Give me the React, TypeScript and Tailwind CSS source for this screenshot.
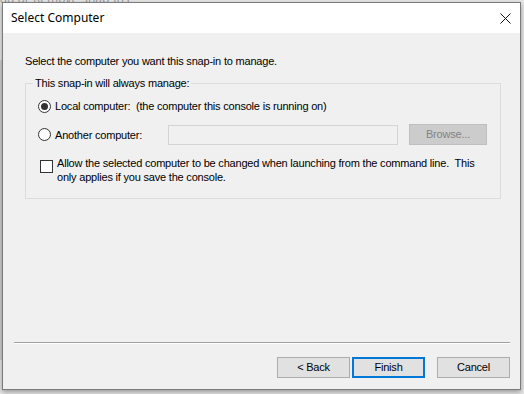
import React from "react";

const body = { fontFamily: '"Liberation Sans", Arial, sans-serif', letterSpacing: "-0.2px" };

function Radio({ checked }: { checked?: boolean }) {
  return (
    <span className="flex h-[13px] w-[13px] shrink-0 items-center justify-center rounded-full border border-[#333333] bg-white">
      {checked && <span className="h-[7px] w-[7px] rounded-full bg-[#333333]" />}
    </span>
  );
}

function Btn({ children, primary }: { children: React.ReactNode; primary?: boolean }) {
  return (
    <div
      className={
        "flex h-[21px] w-[73px] items-center justify-center bg-[#e1e1e1] text-[11px] text-black " +
        (primary ? "border-2 border-[#0078d7]" : "border border-[#adadad]")
      }
    >
      {children}
    </div>
  );
}

export default function App() {
  return (
    <div className="relative h-[394px] w-[524px] overflow-hidden bg-[#e6e6e6]" style={body}>
      {/* window behind */}
      <div className="absolute left-[-8px] top-[-10px] text-[12px] text-[#9a9a9a]" style={{ fontFamily: '"Noto Sans", sans-serif', letterSpacing: "0" }}>
        Add or Remove Snap-ins
      </div>
      <div className="absolute left-0 top-[60px] h-[300px] w-[2px] bg-[#cfcfcf]" />

      {/* dialog */}
      <div className="absolute left-[2px] top-[2px] flex h-[388px] w-[519px] flex-col border border-[#7a7a7a] bg-[#f0f0f0] shadow-[0_2px_5px_rgba(0,0,0,0.35)]">
        {/* title bar */}
        <div className="flex h-[30px] shrink-0 items-center justify-between bg-white pl-[8px] pr-[9px]">
          <span className="text-[12px] text-black" style={{ fontFamily: '"Noto Sans", sans-serif', letterSpacing: "0" }}>
            Select Computer
          </span>
          <svg width="11" height="11" viewBox="0 0 11 11" className="mt-[1px]">
            <path d="M0.5 0.5 L10.5 10.5 M10.5 0.5 L0.5 10.5" stroke="#111" strokeWidth="1" fill="none" />
          </svg>
        </div>

        {/* body */}
        <div className="flex flex-1 flex-col">
          <div className="ml-[22px] mt-[21px] text-[11px] leading-[14px] text-black">
            Select the computer you want this snap-in to manage.
          </div>

          <div className="relative ml-[22px] mt-[15px] h-[116px] w-[476px] border border-[#dcdcdc]">
            <span className="absolute left-[7px] top-[-8px] bg-[#f0f0f0] px-[2px] text-[11px] leading-[14px] text-black">
              This snap-in will always manage:
            </span>

            <div className="flex flex-col pl-[12px] pt-[12px]">
              <div className="flex h-[20px] items-center">
                <Radio checked />
                <span className="ml-[4px] whitespace-pre text-[11px] leading-[14px] text-black">
                  Local computer:  (the computer this console is running on)
                </span>
              </div>

              <div className="mt-[8px] flex h-[21px] items-center">
                <Radio />
                <span className="ml-[4px] w-[113px] text-[11px] leading-[14px] text-black">Another computer:</span>
                <div className="h-[20px] w-[230px] border border-[#d4d4d4] bg-[#f0f0f0]" />
                <div className="ml-[11px] flex h-[21px] w-[78px] items-center justify-center border border-[#bfbfbf] bg-[#cccccc] text-[11px] text-[#838383]">
                  Browse...
                </div>
              </div>

              <div className="mt-[11px] flex items-start pl-[2px]">
                <span className="mt-[4px] h-[13px] w-[13px] shrink-0 border border-[#333333] bg-white" />
                <span className="ml-[4px] whitespace-pre text-[11px] leading-[14px] text-black">
                  {"Allow the selected computer to be changed when launching from the command line.  This\nonly applies if you save the console."}
                </span>
              </div>
            </div>
          </div>

          <div className="mt-auto" />
          <div className="mx-[11px] mr-[10px] border-t border-b border-t-[#a0a0a0] border-b-white" />
          <div className="mb-[11px] mr-[10px] mt-[13px] flex justify-end">
            <Btn>&lt; Back</Btn>
            <div className="ml-[2px]">
              <Btn primary>Finish</Btn>
            </div>
            <div className="ml-[12px]">
              <Btn>Cancel</Btn>
            </div>
          </div>
        </div>
      </div>
    </div>
  );
}
